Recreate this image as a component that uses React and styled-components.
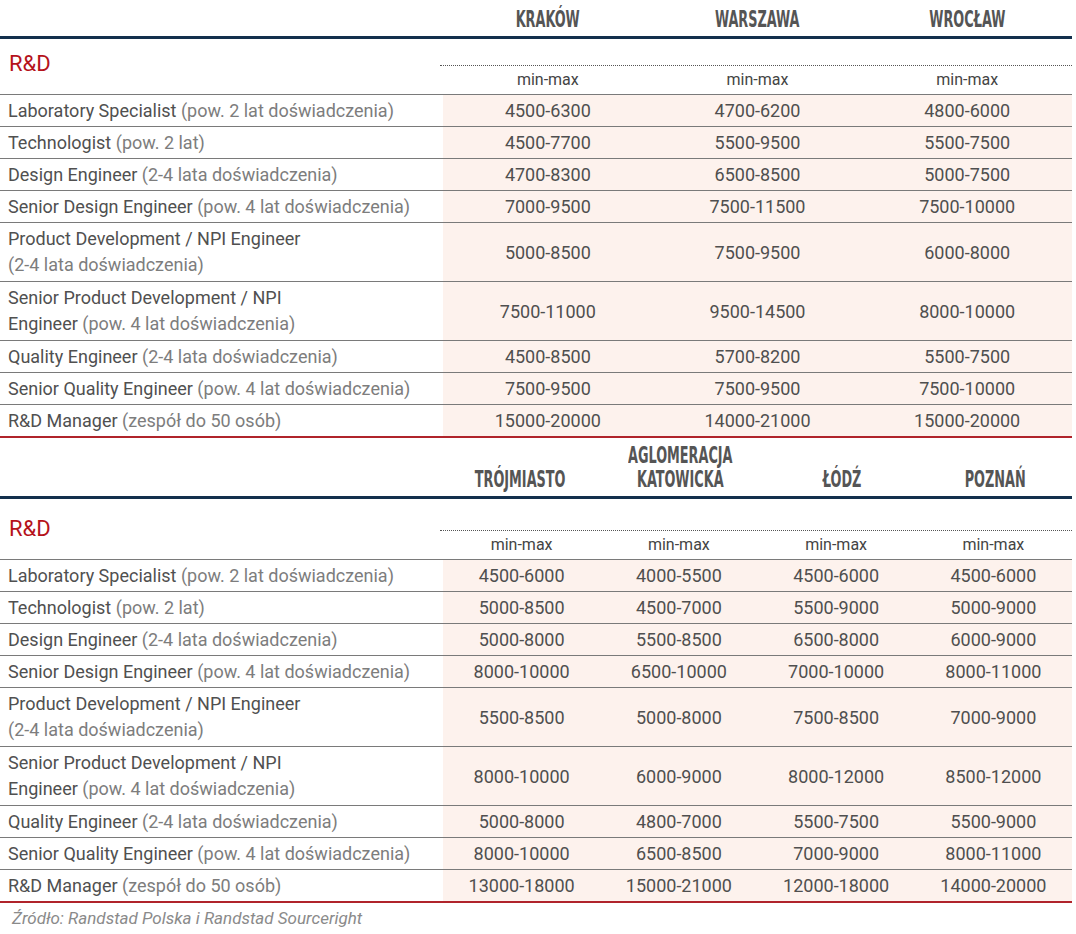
import React from "react";
import styled, { createGlobalStyle } from "styled-components";

const GlobalStyle = createGlobalStyle`
  body {
    margin: 0;
    background: #fff;
    font-family: Roboto, "Liberation Sans", sans-serif;
  }
`;

const PEACH = "#fdf2ed";

const Page = styled.div`
  width: 1072px;
  display: flex;
  flex-direction: column;
`;

const Table = styled.div`
  display: flex;
  flex-direction: column;
  border-bottom: 2px solid #b0242b;
`;

const Grid = styled.div`
  display: grid;
  grid-template-columns: 443px repeat(${(p) => p.$cols}, 1fr);
`;

const HeaderRow = styled(Grid)`
  height: ${(p) => p.$height}px;
  border-bottom: 3px solid #13304d;
  align-items: end;
  padding-bottom: ${(p) => p.$pad}px;
  box-sizing: border-box;
`;

const City = styled.div`
  text-align: center;
  color: #555;
  font-family: "Liberation Sans Narrow", "DejaVu Sans Condensed", "Liberation Sans", sans-serif;
  font-weight: 700;
  font-size: 23px;
  line-height: 24px;

  span {
    display: inline-block;
    transform: scaleX(0.62);
  }
`;

const SectionHead = styled(Grid)`
  border-bottom: 1px solid #7a7a7a;
`;

const SectionLabel = styled.div`
  color: #b5121b;
  font-size: 22px;
  line-height: 26px;
  padding: ${(p) => p.$top}px 0 0 9px;
`;

const RangeBand = styled.div`
  grid-column: 2 / -1;
  margin-top: ${(p) => p.$top}px;
  margin-left: -3px;
  border-top: 1px dotted #555;
  display: grid;
  grid-template-columns: repeat(${(p) => p.$cols}, 1fr);
  padding-left: 3px;
`;

const RangeCell = styled.div`
  text-align: center;
  font-size: 16px;
  line-height: 28px;
  color: #444;
`;

const Row = styled(Grid)`
  border-bottom: ${(p) => (p.$last ? "none" : "1px solid #7a7a7a")};
`;

const Label = styled.div`
  padding: ${(p) => (p.$double ? "3px 0 3px 8px" : "0 0 0 8px")};
  font-size: 18px;
  line-height: ${(p) => (p.$double ? "26px" : "31px")};
  color: #505050;

  em {
    font-style: normal;
    color: #7d7d7d;
  }
`;

const Value = styled.div`
  background: ${PEACH};
  display: flex;
  align-items: center;
  justify-content: center;
  font-size: 18px;
  color: #4f4f4f;
`;

const Source = styled.div`
  padding: 5px 0 0 12px;
  font-size: 17px;
  font-style: italic;
  color: #8a8a8a;
`;

const jobs = [
  { name: "Laboratory Specialist", note: "(pow. 2 lat doświadczenia)" },
  { name: "Technologist", note: "(pow. 2 lat)" },
  { name: "Design Engineer", note: "(2-4 lata doświadczenia)" },
  { name: "Senior Design Engineer", note: "(pow. 4 lat doświadczenia)" },
  { lines: [["Product Development / NPI Engineer", ""], ["", "(2-4 lata doświadczenia)"]] },
  { lines: [["Senior Product Development / NPI", ""], ["Engineer", " (pow. 4 lat doświadczenia)"]] },
  { name: "Quality Engineer", note: "(2-4 lata doświadczenia)" },
  { name: "Senior Quality Engineer", note: "(pow. 4 lat doświadczenia)" },
  { name: "R&D Manager", note: "(zespół do 50 osób)" },
];

const tables = [
  {
    cities: ["KRAKÓW", "WARSZAWA", "WROCŁAW"],
    headerHeight: 39,
    headerPad: 5,
    labelTop: 12,
    bandTop: 26,
    values: [
      ["4500-6300", "4700-6200", "4800-6000"],
      ["4500-7700", "5500-9500", "5500-7500"],
      ["4700-8300", "6500-8500", "5000-7500"],
      ["7000-9500", "7500-11500", "7500-10000"],
      ["5000-8500", "7500-9500", "6000-8000"],
      ["7500-11000", "9500-14500", "8000-10000"],
      ["4500-8500", "5700-8200", "5500-7500"],
      ["7500-9500", "7500-9500", "7500-10000"],
      ["15000-20000", "14000-21000", "15000-20000"],
    ],
  },
  {
    cities: [["TRÓJMIASTO"], ["AGLOMERACJA", "KATOWICKA"], ["ŁÓDŹ"], ["POZNAŃ"]],
    headerHeight: 61,
    headerPad: 5,
    labelTop: 17,
    bandTop: 31,
    values: [
      ["4500-6000", "4000-5500", "4500-6000", "4500-6000"],
      ["5000-8500", "4500-7000", "5500-9000", "5000-9000"],
      ["5000-8000", "5500-8500", "6500-8000", "6000-9000"],
      ["8000-10000", "6500-10000", "7000-10000", "8000-11000"],
      ["5500-8500", "5000-8000", "7500-8500", "7000-9000"],
      ["8000-10000", "6000-9000", "8000-12000", "8500-12000"],
      ["5000-8000", "4800-7000", "5500-7500", "5500-9000"],
      ["8000-10000", "6500-8500", "7000-9000", "8000-11000"],
      ["13000-18000", "15000-21000", "12000-18000", "14000-20000"],
    ],
  },
];

function JobLabel({ job }) {
  if (job.lines) {
    return (
      <Label $double>
        {job.lines.map(([name, note], i) => (
          <div key={i}>
            {name}
            {note && <em>{note}</em>}
          </div>
        ))}
      </Label>
    );
  }
  return (
    <Label>
      {job.name} <em>{job.note}</em>
    </Label>
  );
}

function SalaryTable({ data }) {
  const cols = data.cities.length;
  return (
    <Table>
      <HeaderRow $cols={cols} $height={data.headerHeight} $pad={data.headerPad}>
        <div />
        {data.cities.map((c, i) => {
          const lines = Array.isArray(c) ? c : [c];
          return (
            <City key={i}>
              <span>
                {lines.map((l, j) => (
                  <div key={j}>{l}</div>
                ))}
              </span>
            </City>
          );
        })}
      </HeaderRow>
      <SectionHead $cols={cols}>
        <SectionLabel $top={data.labelTop}>R&amp;D</SectionLabel>
        <RangeBand $cols={cols} $top={data.bandTop}>
          {data.cities.map((_, i) => (
            <RangeCell key={i}>min-max</RangeCell>
          ))}
        </RangeBand>
      </SectionHead>
      {jobs.map((job, r) => (
        <Row key={r} $cols={cols} $last={r === jobs.length - 1}>
          <JobLabel job={job} />
          {data.values[r].map((v, i) => (
            <Value key={i}>{v}</Value>
          ))}
        </Row>
      ))}
    </Table>
  );
}

export default function App() {
  return (
    <Page>
      <GlobalStyle />
      {tables.map((t, i) => (
        <SalaryTable key={i} data={t} />
      ))}
      <Source>Źródło: Randstad Polska i Randstad Sourceright</Source>
    </Page>
  );
}
